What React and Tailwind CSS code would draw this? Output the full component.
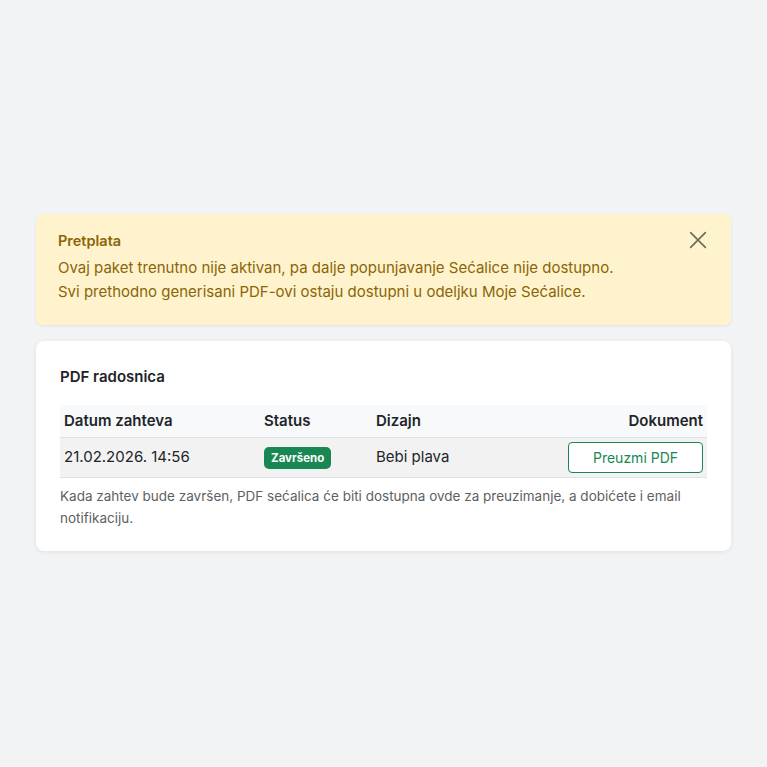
import React from 'react';

export default function App() {
  return (
    <div
      className="min-h-screen bg-[#f2f3f5] px-9 pt-[214px]"
      style={{ fontFamily: 'Inter, "Noto Sans", sans-serif' }}
    >
      {/* subscription warning */}
      <div className="relative rounded-md bg-[#fff3cd] px-[22px] pt-[16px] pb-[21px] shadow-[0_1px_3px_rgba(0,0,0,0.08)]">
        <div className="text-[14.5px] font-semibold leading-[22px] text-[#8a6508]">Pretplata</div>
        <p className="mt-[4px] text-[15px] leading-[24px] text-[#8a6508]">
          Ovaj paket trenutno nije aktivan, pa dalje popunjavanje Sećalice nije dostupno.
          <br />
          Svi prethodno generisani PDF-ovi ostaju dostupni u odeljku Moje Sećalice.
        </p>
        <button className="absolute right-[22px] top-[15px] text-[#6b6b5e]" aria-label="Zatvori">
          <svg width="22" height="22" viewBox="0 0 24 24" fill="none" stroke="currentColor" strokeWidth="1.8" strokeLinecap="round">
            <path d="M4 4l16 16M20 4L4 20" />
          </svg>
        </button>
      </div>

      {/* PDF list */}
      <div className="mt-4 rounded-lg bg-white px-6 pt-[26px] pb-[22px] shadow-[0_1px_4px_rgba(0,0,0,0.08)]">
        <h2 className="text-[15px] font-semibold leading-5 text-[#1f2328]">PDF radosnica</h2>

        <table className="mt-[18px] w-full text-left text-[15px] text-[#212529]">
          <thead>
            <tr className="bg-[#f8f9fa] border-b border-[#dee2e6]">
              <th className="h-[32px] pl-1 font-semibold">Datum zahteva</th>
              <th className="font-semibold">Status</th>
              <th className="font-semibold">Dizajn</th>
              <th className="pr-1 text-right font-semibold">Dokument</th>
            </tr>
          </thead>
          <tbody>
            <tr className="bg-[#f2f2f2] border-b border-[#dee2e6]">
              <td className="h-[40px] w-[204px] pl-1">21.02.2026. 14:56</td>
              <td className="w-[112px]">
                <span className="inline-block rounded-[5px] bg-[#198754] px-[7px] py-[3px] text-[11.5px] font-bold leading-[16px] text-white">
                  Završeno
                </span>
              </td>
              <td>Bebi plava</td>
              <td className="pr-1 text-right">
                <button className="h-[31px] w-[135px] rounded-[4px] border border-[#198754] bg-white text-[14px] text-[#198754]">
                  Preuzmi PDF
                </button>
              </td>
            </tr>
          </tbody>
        </table>

        <p className="mt-[7px] text-[13.5px] leading-[22px] text-[#5c5f63]">
          Kada zahtev bude završen, PDF sećalica će biti dostupna ovde za preuzimanje, a dobićete i email notifikaciju.
        </p>
      </div>
    </div>
  );
}
